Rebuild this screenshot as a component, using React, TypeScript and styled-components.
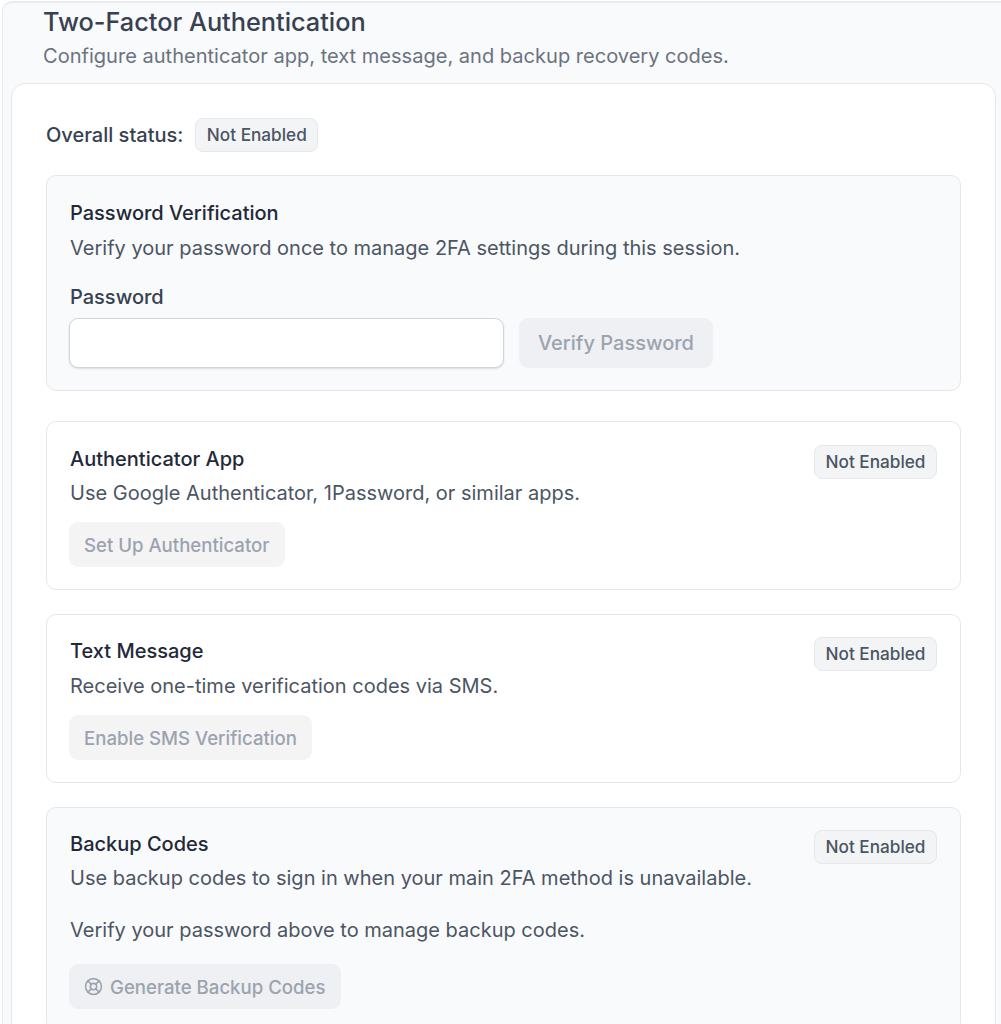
import React from "react";
import styled, { createGlobalStyle } from "styled-components";
import { LifeBuoy } from "lucide-react";

const Global = createGlobalStyle`
  html, body { margin: 0; padding: 0; background: #fff; height: 1024px; overflow: hidden; }
  body { font-family: Inter, "Liberation Sans", sans-serif; color: #374151; }
  * { box-sizing: border-box; }
`;

const Outer = styled.div`
  margin: 1px 0 0 2px;
  height: 1100px;
  background: #f9fafb;
  border: 1px solid #e9ebef;
  border-top-width: 2px;
  border-right: none;
  border-radius: 10px 0 0 0;
  padding: 0 5px 0 8px;
`;
const Header = styled.header`
  padding: 3px 0 0 32px;
  height: 80px;
`;
const Title = styled.h2`
  margin: 0;
  font-size: 25.3px;
  line-height: 32px;
  font-weight: 500;
  color: #374151;
`;
const Subtitle = styled.p`
  margin: 4px 0 0;
  font-size: 20.06px;
  line-height: 28px;
  color: #6b7280;
`;
const Card = styled.div`
  background: #fff;
  border: 1px solid #e5e7eb;
  border-radius: 14px;
  padding: 34px 34px 0;
  display: flex;
  flex-direction: column;
`;
const StatusRow = styled.div`
  display: flex;
  align-items: center;
  gap: 12px;
  margin-bottom: 23px;
`;
const StatusLabel = styled.span`
  font-size: 20px;
  line-height: 28px;
  font-weight: 500;
  color: #374151;
`;
const Badge = styled.span`
  display: inline-flex;
  align-items: center;
  height: 34px;
  padding: 0 10.5px 1px;
  font-size: 17.2px;
  font-weight: 500;
  color: #4b5563;
  background: #f3f4f6;
  border: 1px solid #e5e7eb;
  border-radius: 8px;
  flex: none;
`;
const Section = styled.section<{ $tinted?: boolean; $gap: number; $top?: number }>`
  background: ${(p) => (p.$tinted ? "#f9fafb" : "#fff")};
  border: 1px solid #e5e7eb;
  border-radius: 10px;
  padding: ${(p) => p.$top ?? 23}px 23px 22px;
  margin-bottom: ${(p) => p.$gap}px;
`;
const SectionTop = styled.div`
  display: flex;
  justify-content: space-between;
  align-items: flex-start;
  height: 34px;
`;
const SectionTitle = styled.h3`
  margin: 0;
  font-size: 20px;
  line-height: 28px;
  font-weight: 500;
  color: #1f2937;
`;
const Text = styled.p<{ $top?: number }>`
  margin: ${(p) => p.$top ?? 7}px 0 0;
  font-size: 20px;
  line-height: 28px;
  color: #4b5563;
`;
const FieldLabel = styled.label`
  display: block;
  margin-top: 21px;
  font-size: 20px;
  line-height: 28px;
  font-weight: 500;
  color: #374151;
`;
const FieldRow = styled.div`
  display: flex;
  gap: 15px;
  margin: 7px 0 0 -1px;
  align-items: center;
`;
const Input = styled.input`
  width: 435px;
  height: 50px;
  background: #fff;
  border: 1px solid #d1d5db;
  border-radius: 9px;
  box-shadow: 0 1px 2px rgba(0, 0, 0, 0.12);
  outline: none;
`;
const Button = styled.button<{ $big?: boolean; $onTint?: boolean }>`
  display: inline-flex;
  align-items: center;
  gap: 7px;
  height: ${(p) => (p.$big ? 50 : 45)}px;
  padding: 0 ${(p) => (p.$big ? 18.5 : 15.5)}px 0 ${(p) => (p.$big ? 19 : 15)}px;
  font-family: inherit;
  font-size: ${(p) => (p.$big ? 20 : 18.6)}px;
  font-weight: 500;
  color: #9ca3af;
  background: ${(p) => (p.$onTint ? "#eef0f3" : "#f4f4f5")};
  border: none;
  border-radius: 9px;
`;
const ActionRow = styled.div<{ $top?: number }>`
  margin-top: ${(p) => p.$top ?? 15}px;
  margin-left: -1px;
`;

const StatusBadge = () => <Badge>Not Enabled</Badge>;

export default function App() {
  return (
    <>
      <Global />
      <Outer>
        <Header>
          <Title>Two-Factor Authentication</Title>
          <Subtitle>Configure authenticator app, text message, and backup recovery codes.</Subtitle>
        </Header>
        <Card>
          <StatusRow>
            <StatusLabel>Overall status:</StatusLabel>
            <StatusBadge />
          </StatusRow>
          <Section $tinted $gap={30}>
            <SectionTitle>Password Verification</SectionTitle>
            <Text>Verify your password once to manage 2FA settings during this session.</Text>
            <FieldLabel>Password</FieldLabel>
            <FieldRow>
              <Input type="password" />
              <Button $big $onTint disabled>Verify Password</Button>
            </FieldRow>
          </Section>
          <Section $gap={24}>
            <SectionTop>
              <SectionTitle>Authenticator App</SectionTitle>
              <StatusBadge />
            </SectionTop>
            <Text $top={0}>Use Google Authenticator, 1Password, or similar apps.</Text>
            <ActionRow>
              <Button disabled>Set Up Authenticator</Button>
            </ActionRow>
          </Section>
          <Section $gap={24} $top={22}>
            <SectionTop>
              <SectionTitle>Text Message</SectionTitle>
              <StatusBadge />
            </SectionTop>
            <Text $top={1}>Receive one-time verification codes via SMS.</Text>
            <ActionRow>
              <Button disabled>Enable SMS Verification</Button>
            </ActionRow>
          </Section>
          <Section $tinted $gap={24} $top={22}>
            <SectionTop>
              <SectionTitle>Backup Codes</SectionTitle>
              <StatusBadge />
            </SectionTop>
            <Text $top={0}>Use backup codes to sign in when your main 2FA method is unavailable.</Text>
            <Text $top={24}>Verify your password above to manage backup codes.</Text>
            <ActionRow $top={20}>
              <Button $onTint disabled>
                <LifeBuoy size={19} strokeWidth={2} />
                Generate Backup Codes
              </Button>
            </ActionRow>
          </Section>
        </Card>
      </Outer>
    </>
  );
}
